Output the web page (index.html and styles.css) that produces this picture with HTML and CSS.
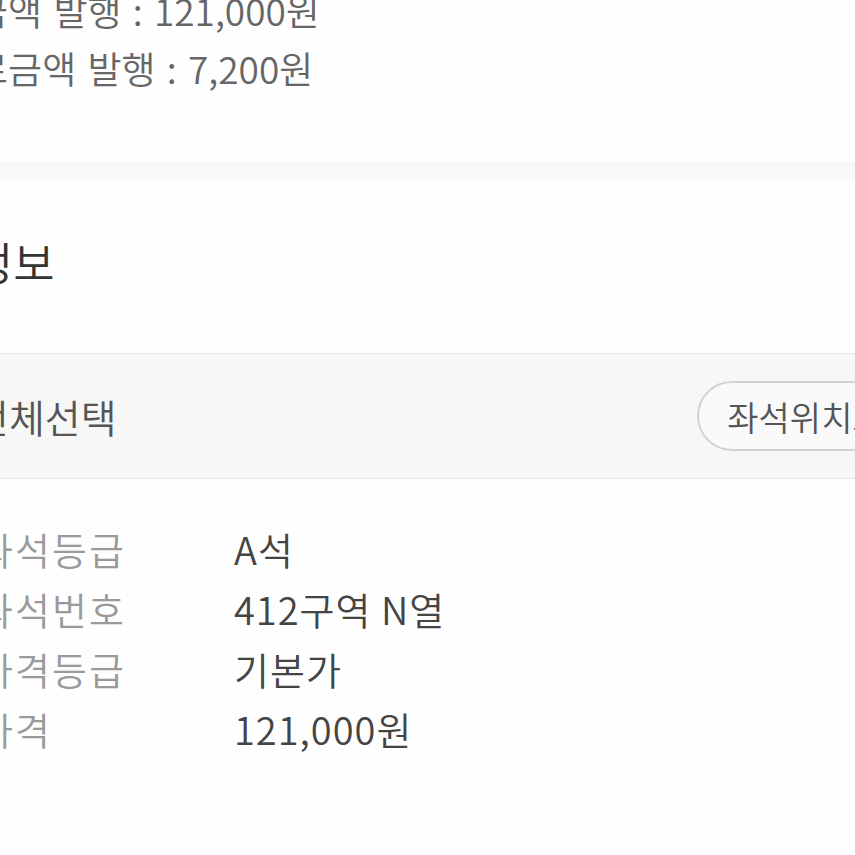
FILE: index.html
```html
<!DOCTYPE html>
<html>
  <head>
    <title>예매 상세</title>
    <link rel="stylesheet" href="styles.css">
  </head>
  <body>
    <div class="page">
      <div class="receipt">
        <p class="receipt-line">결제금액 발행 : 121,000원</p>
        <p class="receipt-line">수수료금액 발행 : 7,200원</p>
      </div>

      <div class="divider"></div>

      <div class="seat-info">
        <h2 class="section-title">좌석정보</h2>

        <div class="select-bar">
          <span class="select-all">전체선택</span>
          <button class="seat-map-btn">좌석위치보기</button>
        </div>

        <dl class="seat-detail">
          <div class="detail-row">
            <dt>좌석등급</dt>
            <dd>A석</dd>
          </div>
          <div class="detail-row">
            <dt>좌석번호</dt>
            <dd>412구역 N열</dd>
          </div>
          <div class="detail-row">
            <dt>가격등급</dt>
            <dd>기본가</dd>
          </div>
          <div class="detail-row">
            <dt>가격</dt>
            <dd>121,000원</dd>
          </div>
        </dl>
      </div>
    </div>
  </body>
</html>
```

FILE: styles.css
```css
html,
body {
  margin: 0;
  height: 100%;
  overflow: hidden;
  background-color: #fefefe;
}

body {
  font-family: "Noto Sans CJK KR", "Noto Sans", sans-serif;
  font-weight: 350;
}

.page {
  width: 1007px;
  margin-left: -22px;
}

.receipt {
  margin-top: -19px;
  padding-bottom: 65px;
}

.receipt-line {
  margin: 0;
  font-size: 37px;
  line-height: 58px;
  color: #666;
  word-spacing: 3px;
  text-indent: -72px;
}

.divider {
  height: 19px;
  margin-left: -40px;
  background-color: #f8f8f8;
}

.seat-info {
  padding-top: 56px;
}

.section-title {
  margin: 0 0 66px;
  font-size: 45px;
  font-weight: 350;
  line-height: 50px;
  color: #333;
  text-indent: -89px;
}

.select-bar {
  display: flex;
  justify-content: space-between;
  align-items: center;
  height: 124px;
  margin-left: -40px;
  padding: 0 40px 0 35px;
  border-top: 1px solid #e6e6e6;
  border-bottom: 1px solid #e6e6e6;
  background-color: #f7f7f7;
}

.select-all {
  font-size: 39px;
  color: #555;
}

.seat-map-btn {
  height: 70px;
  padding: 0 28px;
  border: 2px solid #d2d2d2;
  border-radius: 35px;
  background-color: #fafafa;
  font-family: inherit;
  font-weight: 350;
  font-size: 34px;
  color: #555;
}

.seat-detail {
  margin: 0;
  padding-top: 40px;
}

.detail-row {
  display: flex;
  font-size: 38px;
  line-height: 60px;
}

.detail-row dt {
  width: 256px;
  letter-spacing: 2px;
  color: #9a9a9a;
}

.detail-row dd {
  margin: 0;
  letter-spacing: 1px;
  color: #444;
}
```
